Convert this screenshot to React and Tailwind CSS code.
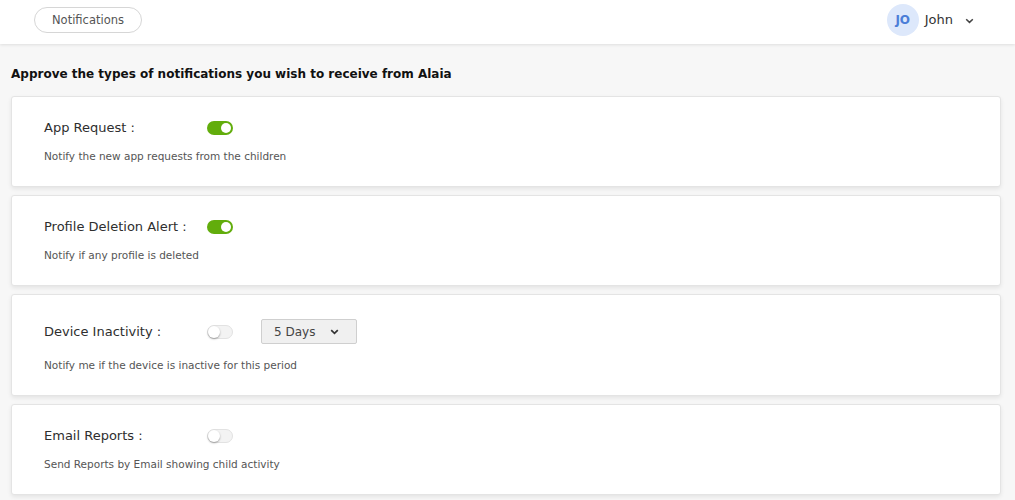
import React from "react";

function Toggle({ on }) {
  return on ? (
    <div className="relative w-[26px] h-[14px] rounded-full bg-[#62ad0c]">
      <div className="absolute right-[2px] top-[2px] w-[10px] h-[10px] rounded-full bg-white" />
    </div>
  ) : (
    <div className="relative w-[26px] h-[14px] rounded-full bg-[#f3f3f3] border border-[#e2e2e2]">
      <div className="absolute left-[0px] top-[0px] w-[12px] h-[12px] rounded-full bg-white shadow-[0_1px_2px_rgba(0,0,0,0.35)]" />
    </div>
  );
}

function Card({ title, desc, on, select, tall }) {
  return (
    <div className="bg-white rounded-[3px] border border-[#e4e4e4] shadow-[0_2px_4px_rgba(0,0,0,0.08)] pl-[32px] pr-4">
      <div className={tall ? "flex items-center h-[25px] mt-[24px]" : "flex items-center h-[16px] mt-[23px]"}>
        <div className="w-[163px] text-[13px] leading-[16px] font-medium text-[#2e2e2e]">{title}</div>
        <Toggle on={on} />
        {select && (
          <div className="ml-[28px] w-[96px] h-[25px] border border-[#cfcfcf] bg-[#f0f0f0] rounded-[2px] flex items-center pl-[12px] text-[12px] leading-[16px] text-[#444]">
            5 Days
            <svg className="ml-[15px]" width="9" height="6" viewBox="0 0 9 6">
              <path d="M1.2 1.2 L4.5 4.4 L7.8 1.2" fill="none" stroke="#333" strokeWidth="1.7" />
            </svg>
          </div>
        )}
      </div>
      <div className={tall ? "text-[10.5px] leading-[14px] text-[#555] mt-[14px] mb-[23px]" : "text-[10.5px] leading-[14px] text-[#555] mt-[13px] mb-[23px]"}>{desc}</div>
    </div>
  );
}

export default function App() {
  return (
    <div className="w-[1015px] h-[500px] bg-[#f7f7f7] overflow-hidden" style={{ fontFamily: '"DejaVu Sans", "Noto Sans", sans-serif' }}>
      <div className="h-[44px] bg-white shadow-[0_1px_3px_rgba(0,0,0,0.1)] flex items-center justify-between pl-[34px] pr-[41px] relative z-10">
        <div className="h-[26px] px-[17px] rounded-full border border-[#d6d6d6] flex items-center text-[11.5px] leading-[16px] font-medium text-[#555] mt-[-5px]">
          Notifications
        </div>
        <div className="flex items-center mt-[-5px]">
          <div className="w-[32px] h-[32px] rounded-full bg-[#dde8fb] flex items-center justify-center text-[12px] font-semibold text-[#4b7ed8]">
            JO
          </div>
          <div className="ml-[6px] text-[13px] font-medium text-[#333]">John</div>
          <svg className="ml-[12px] mt-[2px]" width="9" height="6" viewBox="0 0 9 6">
            <path d="M1.2 1.2 L4.5 4.4 L7.8 1.2" fill="none" stroke="#444" strokeWidth="1.5" />
          </svg>
        </div>
      </div>
      <div className="pl-[11px] pr-[14px]">
        <div className="mt-[22px] mb-[14px] text-[12px] leading-[16px] font-bold text-[#111]">
          Approve the types of notifications you wish to receive from Alaia
        </div>
        <div className="flex flex-col gap-[8px]">
          <Card title="App Request :" desc="Notify the new app requests from the children" on />
          <Card title="Profile Deletion Alert :" desc="Notify if any profile is deleted" on />
          <Card title="Device Inactivity :" desc="Notify me if the device is inactive for this period" select tall />
          <Card title="Email Reports :" desc="Send Reports by Email showing child activity" />
        </div>
      </div>
    </div>
  );
}
